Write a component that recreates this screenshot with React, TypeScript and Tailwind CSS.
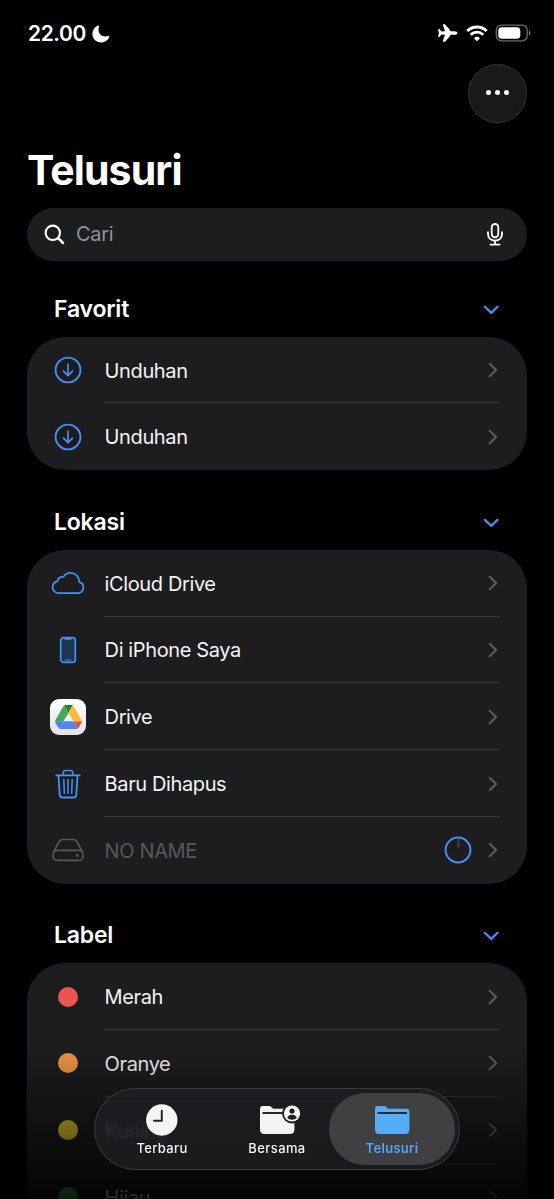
import React from 'react';

interface Item {
  id: number;
  name: string;
  icon: React.ReactNode;
  disabled?: boolean;
  loading?: boolean;
}

interface Section {
  title: string;
  items: Item[];
}

const DownloadIcon = () => (
  <svg width="28" height="28" viewBox="0 0 28 28" fill="none" stroke="#4490f6" strokeLinecap="round" strokeLinejoin="round">
    <circle cx="14" cy="14" r="12.4" strokeWidth="1.9" />
    <path d="M14 8.2v11.4M9.4 15.2l4.6 4.5 4.6-4.5" strokeWidth="1.7" />
  </svg>
);

const CloudIcon = () => (
  <svg width="34" height="24" viewBox="0 0 34 24" fill="none" stroke="#4490f6" strokeWidth="1.8" strokeLinejoin="round">
    <path d="M8 22.2h18.3c3.5 0 6.1-2.5 6.1-5.7 0-2.8-1.7-5-4.2-5.7C28.2 5.6 24.4 1.8 19.5 1.8c-3.2 0-5.8 1.7-7.2 4.3-3-.8-5.6 1.1-5.8 4.2C3.5 10.9 1.6 13.3 1.6 16.2c0 3.3 2.7 6 6.4 6z" />
  </svg>
);

const PhoneIcon = () => (
  <svg width="18" height="28" viewBox="0 0 18 28" fill="none" stroke="#4490f6">
    <rect x="1.7" y="1.7" width="14.6" height="24.6" rx="2.7" fill="#1f3650" strokeWidth="1.7" />
    <path d="M6.2 2.8h5.6" strokeWidth="1.8" strokeLinecap="round" />
    <path d="M6 24.1h6" strokeWidth="0.9" strokeLinecap="round" />
  </svg>
);

const DriveIcon = () => (
  <div className="flex h-9 w-9 items-center justify-center rounded-[9px] bg-linear-to-b from-white to-[#e3e3e5]">
    <svg width="27" height="24" viewBox="0 0 87.3 78">
      <path d="M6.6 66.85l3.85 6.65c.8 1.4 1.95 2.5 3.3 3.3L27.5 53H0c0 1.55.4 3.1 1.2 4.5z" fill="#4a7df0" />
      <path d="M43.65 25L29.9 1.2c-1.35.8-2.5 1.9-3.3 3.3l-25.4 44A9.06 9.06 0 0 0 0 53h27.5z" fill="#45a854" />
      <path d="M73.55 76.8c1.35-.8 2.5-1.9 3.3-3.3l1.6-2.75L86.1 57.5c.8-1.4 1.2-2.95 1.2-4.5H59.8l5.85 11.5z" fill="#e2503f" />
      <path d="M43.65 25L57.4 1.2C56.05.4 54.5 0 52.9 0H34.4c-1.6 0-3.15.45-4.5 1.2z" fill="#2c7d3c" />
      <path d="M59.8 53H27.5L13.75 76.8c1.35.8 2.9 1.2 4.5 1.2h50.8c1.6 0 3.15-.45 4.5-1.2z" fill="#4f86f5" />
      <path d="M73.4 26.5L60.7 4.5c-.8-1.4-1.95-2.5-3.3-3.3L43.65 25 59.8 53h27.45c0-1.55-.4-3.1-1.2-4.5z" fill="#f5be37" />
    </svg>
  </div>
);

const TrashIcon = () => (
  <svg width="26" height="30" viewBox="0 0 26 30" fill="none" stroke="#4490f6" strokeLinecap="round" strokeLinejoin="round">
    <path d="M1.3 6.4h23.4" strokeWidth="1.8" />
    <path d="M8.3 6V3.8c0-1.5.8-2.3 2.3-2.3h4.8c1.5 0 2.3.8 2.3 2.3V6" strokeWidth="1.7" />
    <path d="M3.5 6.6l1.2 19.3c.1 1.7 1.1 2.6 2.7 2.6h11.2c1.6 0 2.6-.9 2.7-2.6l1.2-19.3" strokeWidth="1.8" />
    <path d="M8.8 10.5l.5 13.8M13 10.5v13.8M17.2 10.5l-.5 13.8" strokeWidth="1.5" />
  </svg>
);

const DiskIcon = () => (
  <svg width="32" height="24" viewBox="0 0 32 24" fill="none" stroke="#58585c" strokeWidth="1.7" strokeLinejoin="round">
    <path d="M1.4 14.2L7 3.8C7.8 2.2 9 1.5 10.6 1.5h10.8c1.6 0 2.8.7 3.6 2.3l5.6 10.4" />
    <rect x="1.1" y="12.4" width="29.8" height="10" rx="4" />
    <circle cx="25.3" cy="17.5" r="1.5" fill="#58585c" stroke="none" />
  </svg>
);

const ChevronRight = () => (
  <svg width="10" height="16" viewBox="0 0 10 16" fill="none" stroke="#5d5d61" strokeWidth="2.1" strokeLinecap="round" strokeLinejoin="round">
    <path d="M1.7 1.8L8.2 8l-6.5 6.2" />
  </svg>
);

const ChevronDown = () => (
  <svg width="16" height="10" viewBox="0 0 16 10" fill="none" stroke="#4490f6" strokeWidth="2.2" strokeLinecap="round" strokeLinejoin="round">
    <path d="M1.9 1.8l6.4 6.1 6.2-6.1" />
  </svg>
);

const ProgressRing = () => (
  <svg width="28" height="28" viewBox="0 0 28 28" fill="none">
    <path d="M14.4 3v8.5" stroke="#3d4a60" strokeWidth="1.5" />
    <circle cx="14" cy="14" r="12.4" stroke="#4490f6" strokeWidth="2" />
  </svg>
);

const sections: Section[] = [
  {
    title: 'Favorit',
    items: [
      { id: 1, name: 'Unduhan', icon: <DownloadIcon /> },
      { id: 2, name: 'Unduhan', icon: <DownloadIcon /> },
    ],
  },
  {
    title: 'Lokasi',
    items: [
      { id: 3, name: 'iCloud Drive', icon: <CloudIcon /> },
      { id: 4, name: 'Di iPhone Saya', icon: <PhoneIcon /> },
      { id: 5, name: 'Drive', icon: <DriveIcon /> },
      { id: 6, name: 'Baru Dihapus', icon: <TrashIcon /> },
      { id: 7, name: 'NO NAME', icon: <DiskIcon />, disabled: true, loading: true },
    ],
  },
  {
    title: 'Label',
    items: [
      { id: 8, name: 'Merah', icon: <span className="h-5 w-5 rounded-full bg-[#ec5450]" /> },
      { id: 9, name: 'Oranye', icon: <span className="h-5 w-5 rounded-full bg-[#f09848]" /> },
      { id: 10, name: 'Kuning', icon: <span className="h-5 w-5 rounded-full bg-[#e6c62f]" /> },
      { id: 11, name: 'Hijau', icon: <span className="h-5 w-5 rounded-full bg-[#4cc04f]" /> },
    ],
  },
];

const StatusBar = () => (
  <div className="flex h-[66px] items-center justify-between pr-[23px] pl-7">
    <div className="flex items-center gap-[6px] pt-px">
      <span className="text-[21px] leading-6 font-semibold tracking-[-0.4px]">22.00</span>
      <svg width="18" height="18" viewBox="0 0 18 18" fill="#fff">
        <path d="M6.4.5c.5-.2.9.2.7.7C6.7 2.3 6.5 3.3 6.5 4.4c0 4.2 2.9 7 7.1 7 1.1 0 2.1-.2 3.1-.6.5-.2.9.2.7.7C16.2 15.1 12.9 17.5 9 17.5c-4.9 0-8.6-3.7-8.6-8.5C.4 5.2 2.8 1.8 6.4.5z" />
      </svg>
    </div>
    <div className="flex items-center">
      <svg width="20" height="18" viewBox="0 0 20 18" fill="#fff" className="mr-2">
        <path d="M19.5 9c0-1-1.3-1.800-3-1.800h-3.600L7.700.9C7.400.5 7.100.3 6.600.3H5.400c-.4 0-.6.3-.5.7l2.100 6.300-3.600.3-1.900-2.300c-.2-.2-.4-.3-.7-.3H.6c-.3 0-.4.2-.4.5L.9 9l-.7 3.500c0 .3.1.5.4.5h.2c.3 0 .5-.1.7-.3l1.900-2.300 3.600.3-2.100 6.300c-.1.4.1.7.5.7h1.200c.5 0 .8-.2 1.100-.6l5.200-6.300h3.600c1.700 0 3-.8 3-1.800z" />
      </svg>
      <svg width="22" height="17" viewBox="0 0 22 17" fill="none" stroke="#fff" strokeWidth="2.9" className="mr-[7px]">
        <path d="M1.3 6.1a13.7 13.7 0 0 1 19.4 0" />
        <path d="M4.8 9.7a8.8 8.8 0 0 1 12.4 0" />
        <path d="M11 16.2l-3-3a4.3 4.3 0 0 1 6 0z" fill="#fff" stroke="none" />
      </svg>
      <svg width="36" height="18" viewBox="0 0 36 18">
        <rect x="1.3" y="1.2" width="31" height="15.6" rx="5.2" fill="none" stroke="#6b6b6b" strokeWidth="1.3" />
        <rect x="3.3" y="3.2" width="22" height="11.6" rx="3.6" fill="#fff" />
        <path d="M33.8 6.4c1.200.5 1.800 1.400 1.800 2.600s-.6 2.100-1.800 2.600z" fill="#6b6b6b" />
      </svg>
    </div>
  </div>
);

const SearchBar = () => (
  <div className="mx-[27px] flex h-[53px] items-center rounded-full bg-[#1d1d1f] pr-6 pl-[17px]">
    <svg width="21" height="21" viewBox="0 0 21 21" fill="none" stroke="#fff" strokeLinecap="round">
      <circle cx="8.8" cy="8.8" r="7.2" strokeWidth="2.1" />
      <path d="M14.4 14.4l4.6 4.6" strokeWidth="2.7" />
    </svg>
    <span className="ml-[11px] flex-1 text-[20px] leading-6 tracking-[-0.3px] text-[#929297]">Cari</span>
    <svg width="16" height="23" viewBox="0 0 16 23" fill="none" stroke="#fff" strokeWidth="1.8" strokeLinecap="round">
      <rect x="4.7" y="1" width="6.6" height="13.4" rx="3.3" />
      <path d="M1 9.2v1.9c0 4 2.8 6.6 7 6.6s7-2.6 7-6.6V9.2M8 17.7v3.8M3.4 21.6h9.2" />
    </svg>
  </div>
);

const ListRow = ({ item, last }: { item: Item; last: boolean }) => (
  <div className="flex h-[66.8px] pl-[18px]">
    <div className="flex w-[46px] shrink-0 items-center justify-center">{item.icon}</div>
    <div
      className={`mr-[27px] ml-[13px] flex flex-1 items-center border-b pt-px pr-[2px] ${
        last ? 'border-transparent' : 'border-[#3a3a3c]'
      }`}
    >
      <span
        className={`flex-1 pt-px pl-[0.6px] text-[20px] leading-6 tracking-[-0.38px] ${
          item.disabled ? 'text-[#58585c]' : 'text-[#f4f4f5]'
        }`}
      >
        {item.name}
      </span>
      {item.loading && (
        <span className="mr-4">
          <ProgressRing />
        </span>
      )}
      <ChevronRight />
    </div>
  </div>
);

const FolderShape = () => (
  <>
    <path d="M1 5.2V3.8C1 1.9 2 1 3.9 1h5.7c1.1 0 1.8.2 2.6.9l1.2 1c.7.6 1.2.8 2.2.8h16.5c2 0 3.1 1 3.3 2.9v17.8c0 3.1-1.500 4.500-4.500 4.500H5.400C2.400 28.900 1 27.500 1 24.400z" />
    <path d="M4.2 8h28" stroke="#2b2b2d" strokeWidth="1.9" strokeLinecap="round" />
  </>
);

const TabBar = () => (
  <nav className="absolute bottom-[29px] left-[94px] flex h-[82px] w-[366px] rounded-full border border-[#3d3d40] bg-[#1e1e20]/85 px-1 py-1 backdrop-blur-[1px]">
    <div className="flex w-[126px] shrink-0 flex-col items-center pt-[11px]">
      <svg width="32" height="32" viewBox="0 0 32 32">
        <circle cx="15.8" cy="16" r="15.7" fill="#f4f4f6" />
        <path d="M15.8 6.800v10H8" fill="none" stroke="#232325" strokeWidth="2" strokeLinecap="round" strokeLinejoin="round" />
      </svg>
      <span className="mt-[3px] text-[13px] leading-[18px] font-medium tracking-[0.35px] text-[#f4f4f6]">Terbaru</span>
    </div>
    <div className="-ml-[11px] flex w-[126px] shrink-0 flex-col items-center pt-[11px]">
      <svg width="42" height="32" viewBox="-1 -1 42 32" className="ml-[3px]" fill="#f4f4f6">
        <FolderShape />
        <circle cx="33" cy="8.5" r="9.9" fill="#1f1f21" />
        <circle cx="33" cy="8.5" r="8.1" />
        <circle cx="33" cy="6" r="2.6" fill="#1f1f21" />
        <path d="M28.3 12.8c.5-2 2.3-3 4.7-3s4.2 1 4.7 3c-1 1.2-2.7 1.9-4.7 1.9s-3.7-.7-4.7-1.9z" fill="#1f1f21" />
      </svg>
      <span className="mt-[3px] text-[13px] leading-[18px] font-medium tracking-[0.4px] text-[#f4f4f6]">Bersama</span>
    </div>
    <div className="-ml-[11px] flex w-[126px] shrink-0 flex-col items-center rounded-full bg-[#404042] pt-[11px]">
      <svg width="37" height="32" viewBox="0 -1 37 32" fill="#54adf8">
        <FolderShape />
      </svg>
      <span className="mt-[3px] text-[13px] leading-[18px] font-semibold tracking-[0.3px] text-[#54a5f0]">Telusuri</span>
    </div>
  </nav>
);

const App = () => {
  return (
    <div className="relative h-[1199px] w-[554px] overflow-hidden bg-black font-['Inter','Liberation_Sans',sans-serif] text-white">
      <StatusBar />
      <div className="-mt-[2px] flex justify-end pr-[27px]">
        <button className="flex h-[59px] w-[59px] items-center justify-center gap-1 rounded-full border border-[#353535] bg-[#191919] pb-[2px]">
          <span className="h-[5px] w-[5px] rounded-full bg-white" />
          <span className="h-[5px] w-[5px] rounded-full bg-white" />
          <span className="h-[5px] w-[5px] rounded-full bg-white" />
        </button>
      </div>
      <h1 className="mt-[23px] mb-[13.7px] pl-[27px] text-[41px] leading-[48px] font-bold tracking-[-0.9px]">Telusuri</h1>
      <SearchBar />

      {sections.map((section, index) => (
        <section key={section.title}>
          <div
            className={`flex items-end justify-between pr-[55px] pb-[13px] pl-[54px] ${
              index === 0 ? 'h-[76px]' : 'h-[79.5px]'
            }`}
          >
            <h2 className="text-[23px] leading-[30px] font-semibold tracking-[-0.2px]">{section.title}</h2>
            <span className="pb-[9px]">
              <ChevronDown />
            </span>
          </div>
          <div className="mx-[27px] rounded-[38px] bg-[#1d1d1f]">
            {section.items.map((item, i) => (
              <ListRow key={item.id} item={item} last={i === section.items.length - 1} />
            ))}
          </div>
        </section>
      ))}

      {/* fade behind the tab bar */}
      <div className="absolute inset-x-0 bottom-0 h-[155px] bg-linear-to-b from-transparent from-0% via-black/48 via-55% to-black/85" />
      <TabBar />
    </div>
  );
};

export default App;
